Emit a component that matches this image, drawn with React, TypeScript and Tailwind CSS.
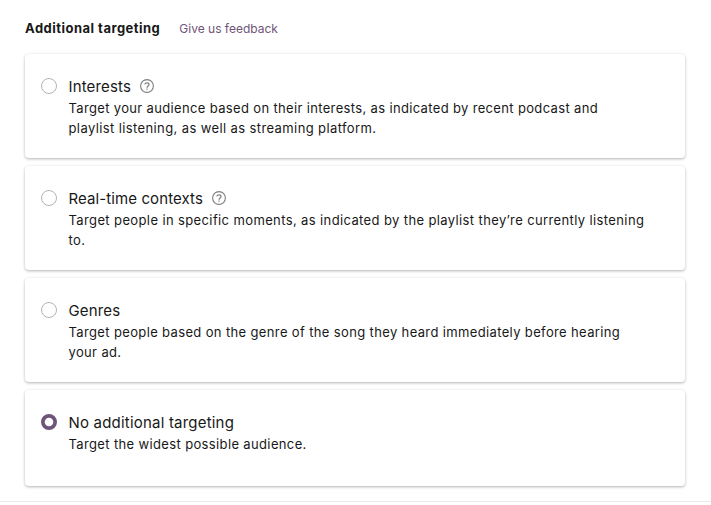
const HelpIcon = () => (
  <svg className="ml-[9px] h-[14px] w-[14px] text-[#7f7f7f]" viewBox="0 0 14 14" fill="none" stroke="currentColor" strokeWidth="1.1">
    <circle cx="7" cy="7" r="6.4" />
    <path d="M5 5.6C5 4.4 5.9 3.8 7 3.8s2 .7 2 1.7C9 7 7 6.9 7 8.7" strokeWidth="1.2" />
    <path d="M7 9.6v1.2" strokeWidth="1.2" />
  </svg>
);

interface TargetingOption {
  title: string;
  titleClass: string;
  lines: { text: string; className: string }[];
  help?: boolean;
  selected?: boolean;
}

const options: TargetingOption[] = [
  {
    title: 'Interests',
    titleClass: 'tracking-[0.15px]',
    help: true,
    lines: [
      { text: 'Target your audience based on their interests, as indicated by recent podcast and', className: 'tracking-[0.345px]' },
      { text: 'playlist listening, as well as streaming platform.', className: 'tracking-[0.39px]' },
    ],
  },
  {
    title: 'Real-time contexts',
    titleClass: 'tracking-[0.1px]',
    help: true,
    lines: [
      { text: 'Target people in specific moments, as indicated by the playlist they’re currently listening', className: 'tracking-[0.38px]' },
      { text: 'to.', className: 'tracking-[0.36px]' },
    ],
  },
  {
    title: 'Genres',
    titleClass: 'tracking-[0.15px]',
    lines: [
      { text: 'Target people based on the genre of the song they heard immediately before hearing', className: 'tracking-[0.36px]' },
      { text: 'your ad.', className: 'tracking-[0.36px]' },
    ],
  },
  {
    title: 'No additional targeting',
    titleClass: 'tracking-[0.2px]',
    selected: true,
    lines: [{ text: 'Target the widest possible audience.', className: 'tracking-[0.36px]' }],
  },
];

const Radio = ({ selected }: { selected?: boolean }) => (
  <svg className="mt-[2px] h-4 w-4 shrink-0" viewBox="0 0 16 16" fill="none">
    {selected ? (
      <circle cx="8" cy="8" r="6.15" stroke="#6f5479" strokeWidth="3.7" />
    ) : (
      <circle cx="8" cy="8" r="7.5" stroke="#b3b3b3" />
    )}
  </svg>
);

const OptionCard = ({ option }: { option: TargetingOption }) => (
  <label
    className={`flex w-[660px] rounded-[4px] bg-white pl-4 pt-[22px] shadow-[0_1px_3px_rgba(0,0,0,0.3)] ${option.selected ? 'h-24' : 'h-[104px]'}`}
  >
    <Radio selected={option.selected} />
    <div className="ml-[11.5px] whitespace-nowrap">
      <div className="flex h-5 items-center text-[15px] leading-5">
        <span className={`pt-[2px] ${option.titleClass}`}>{option.title}</span>
        {option.help && <HelpIcon />}
      </div>
      <div className="mt-[2px] text-[13px] leading-5">
        {option.lines.map((line) => (
          <p key={line.text}><span className={line.className}>{line.text}</span></p>
        ))}
      </div>
    </div>
  </label>
);

export default function App() {
  return (
    <main className="h-[505px] bg-white font-['Inter',sans-serif] text-[#181818]">
      <div className="h-[502px] border-b border-[#e9e9e9] pl-[25px] pt-[18px]">
        <div className="flex h-5 items-center whitespace-nowrap">
          <h2 className="pt-[2px] text-[13px] font-bold tracking-[0.48px]">Additional targeting</h2>
          <a className="ml-[19px] pt-[2px] text-[12px] text-[#6f5479]">Give us feedback</a>
        </div>
        <div className="mt-4 flex flex-col gap-2">
          {options.map((option) => (
            <OptionCard key={option.title} option={option} />
          ))}
        </div>
      </div>
    </main>
  );
}
